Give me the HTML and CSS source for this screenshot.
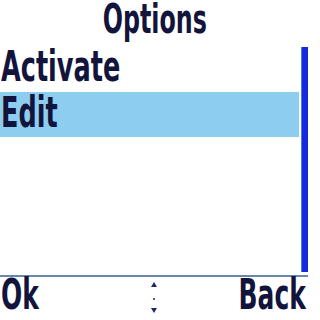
FILE: index.html
```html
<!DOCTYPE html>
<html>
<head>
<meta charset="utf-8">
<link rel="stylesheet" href="styles.css">
</head>
<body>
<div class="screen">
  <div class="title"><span class="txt mid">Options</span></div>
  <div class="main">
    <div class="list">
      <div class="item first"><span class="txt">Activate</span></div>
      <div class="item selected"><span class="txt">Edit</span></div>
    </div>
    <div class="scroll"><div class="thumb"></div></div>
  </div>
  <div class="softkeys">
    <span class="key left"><span class="txt">Ok</span></span>
    <span class="nav">
      <svg width="8" height="36" viewBox="0 0 8 36"><path d="M4 3 L7 8 L1 8 Z" fill="#1a2a6a"/><rect x="3" y="19" width="2" height="2" fill="#4a5a9a"/><path d="M1 29 L7 29 L4 34 Z" fill="#1a2a6a"/></svg>
    </span>
    <span class="key right"><span class="txt end">Back</span></span>
  </div>
</div>
</body>
</html>
```
FILE: styles.css
```css
html, body {
  margin: 0;
  padding: 0;
  background: #ffffff;
}
.screen {
  width: 308px;
  height: 320px;
  display: flex;
  flex-direction: column;
  font-family: "DejaVu Sans Condensed", "DejaVu Sans", sans-serif;
  font-weight: bold;
  color: #12143c;
  overflow: hidden;
}
.txt {
  display: inline-block;
  transform: scaleX(0.66);
  transform-origin: left center;
  white-space: nowrap;
}
.txt.mid {
  transform-origin: center center;
}
.txt.end {
  transform-origin: right center;
}
.title {
  height: 46px;
  font-size: 40px;
  line-height: 39px;
  text-align: center;
  padding-left: 2px;
}
.main {
  height: 229px;
  display: flex;
  border-bottom: 2px solid #6a86ac;
}
.list {
  flex: 1;
  display: flex;
  flex-direction: column;
}
.item {
  height: 45px;
  font-size: 43px;
  line-height: 40px;
  padding-left: 1px;
}
.item.first {
  height: 46px;
}
.item.selected {
  background: #8ccdf0;
  margin-right: 2px;
}
.scroll {
  width: 7px;
  padding-top: 1px;
  padding-bottom: 3px;
  display: flex;
}
.thumb {
  flex: 1;
  background: #1428e0;
  box-shadow: inset 1px 0 0 #4a7af0;
}
.softkeys {
  height: 43px;
  display: grid;
  grid-template-columns: 1fr auto 1fr;
  font-size: 42px;
  line-height: 36px;
  padding: 0 2px 0 1px;
}
.key.left {
  justify-self: start;
}
.key.right {
  justify-self: end;
}
.nav {
  display: flex;
  margin-top: 2px;
  align-self: start;
}
```
